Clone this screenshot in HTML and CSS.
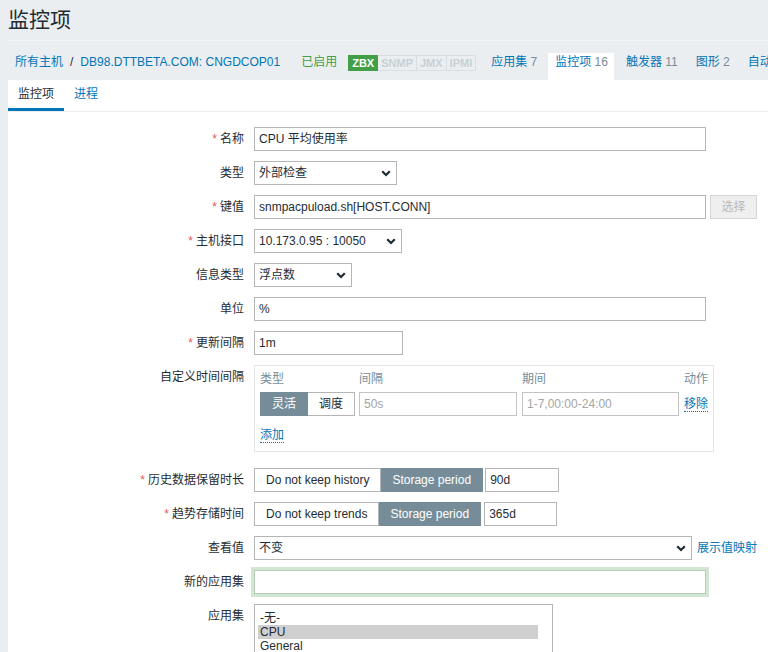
FILE: index.html
```html
<!DOCTYPE html>
<html lang="zh-CN">
<head>
<meta charset="utf-8">
<title>监控项</title>
<link rel="stylesheet" href="styles.css">
</head>
<body>
<div class="page">
  <header class="head"><h1>监控项</h1></header>
  <nav class="crumbs">
    <a class="crumb">所有主机</a><span class="sep">/</span><a class="crumb">DB98.DTTBETA.COM: CNGDCOP01</a>
    <span class="status">已启用</span>
    <span class="badges"><span class="badge on">ZBX</span><span class="badge">SNMP</span><span class="badge">JMX</span><span class="badge">IPMI</span></span>
    <a class="navtab first">应用集 <span class="cnt">7</span></a>
    <a class="navtab current">监控项 <span class="cnt">16</span></a>
    <a class="navtab">触发器 <span class="cnt">11</span></a>
    <a class="navtab">图形 <span class="cnt">2</span></a>
    <a class="navtab">自动发现规则</a>
  </nav>
  <main class="panel">
    <div class="tabs"><span class="tab active">监控项</span><span class="tab">进程</span></div>
    <div class="form">
      <div class="lbl req">名称</div>
      <div class="ctl"><div class="field wide">CPU 平均使用率</div></div>

      <div class="lbl">类型</div>
      <div class="ctl"><div class="field select w-type"><span>外部检查</span><svg class="chev" width="10" height="7" viewBox="0 0 10 7"><path d="M1.2 1.2l3.8 3.8 3.8-3.8" fill="none" stroke="#1f2c33" stroke-width="2.2"/></svg></div></div>

      <div class="lbl req">键值</div>
      <div class="ctl"><div class="field wide">snmpacpuload.sh[HOST.CONN]</div><div class="btn-disabled">选择</div></div>

      <div class="lbl req">主机接口</div>
      <div class="ctl"><div class="field select w-iface"><span>10.173.0.95 : 10050</span><svg class="chev" width="10" height="7" viewBox="0 0 10 7"><path d="M1.2 1.2l3.8 3.8 3.8-3.8" fill="none" stroke="#1f2c33" stroke-width="2.2"/></svg></div></div>

      <div class="lbl">信息类型</div>
      <div class="ctl"><div class="field select w-info"><span>浮点数</span><svg class="chev" width="10" height="7" viewBox="0 0 10 7"><path d="M1.2 1.2l3.8 3.8 3.8-3.8" fill="none" stroke="#1f2c33" stroke-width="2.2"/></svg></div></div>

      <div class="lbl">单位</div>
      <div class="ctl"><div class="field wide">%</div></div>

      <div class="lbl req">更新间隔</div>
      <div class="ctl"><div class="field w-delay">1m</div></div>

      <div class="lbl">自定义时间间隔</div>
      <div class="ctl">
        <div class="intervals">
          <div class="ihead">类型</div><div class="ihead">间隔</div><div class="ihead">期间</div><div class="ihead ralign">动作</div>
          <div class="seg"><span class="on">灵活</span><span>调度</span></div>
          <div class="field ph">50s</div>
          <div class="field ph">1-7,00:00-24:00</div>
          <div class="ralign action"><a class="dotted">移除</a></div>
          <div class="addrow"><a class="dotted">添加</a></div>
        </div>
      </div>

      <div class="lbl req">历史数据保留时长</div>
      <div class="ctl"><div class="seg"><span>Do not keep history</span><span class="on">Storage period</span></div><div class="field w-hist">90d</div></div>

      <div class="lbl req">趋势存储时间</div>
      <div class="ctl"><div class="seg"><span>Do not keep trends</span><span class="on">Storage period</span></div><div class="field w-trend">365d</div></div>

      <div class="lbl">查看值</div>
      <div class="ctl"><div class="field select w-view"><span>不变</span><svg class="chev" width="10" height="7" viewBox="0 0 10 7"><path d="M1.2 1.2l3.8 3.8 3.8-3.8" fill="none" stroke="#1f2c33" stroke-width="2.2"/></svg></div><a class="link">展示值映射</a></div>

      <div class="lbl">新的应用集</div>
      <div class="ctl"><div class="field wide focus"></div></div>

      <div class="lbl">应用集</div>
      <div class="ctl">
        <div class="listbox">
          <div class="opt">-无-</div>
          <div class="opt sel">CPU</div>
          <div class="opt">General</div>
          <div class="opt">Memory</div>
          <div class="opt">Network</div>
        </div>
      </div>
    </div>
  </main>
</div>
</body>
</html>
```

FILE: styles.css
```css
* { box-sizing: border-box; }
html, body { margin: 0; padding: 0; overflow: hidden; }
body {
  width: 768px;
  height: 652px;
  background: #ebeef0;
  color: #1f2c33;
  font: 12px/1.2 "Liberation Sans", Arial, "Noto Sans CJK SC", sans-serif;
}
a { text-decoration: none; cursor: pointer; }

.page { padding-left: 8px; }

.head {
  height: 41px;
  display: flex;
  align-items: center;
  border-bottom: 1px solid #f3f4f5;
}
.head h1 {
  margin: 0;
  font-size: 21px;
  font-weight: normal;
  line-height: 24px;
  color: #1f2c33;
}

.crumbs {
  display: flex;
  align-items: flex-start;
  height: 39px;
  padding: 12px 0 0 7px;
  white-space: nowrap;
}
.crumb { color: #0275b8; line-height: 18px; }
.sep { padding: 0 7px; line-height: 18px; }
.status { margin-left: 21px; color: #429e47; line-height: 18px; }
.badges { display: flex; margin-left: 11px; margin-top: 2px; }
.badge {
  height: 16px;
  line-height: 14px;
  padding: 0 3px;
  border: 1px solid #d9dee1;
  color: #c8d0d5;
  font-size: 11px;
  font-weight: bold;
}
.badge + .badge { border-left: none; }
.badge.on { background: #429e47; border-color: #429e47; color: #fff; padding: 0 3px; }
.navtab {
  color: #0275b8;
  line-height: 18px;
  padding: 0 6px 0 7px;
  margin-left: 5px;
}
.navtab.first { margin-left: 8px; }
.navtab.current { background: #fff; height: 27px; }
.cnt { color: #768d99; }

.panel { background: #fff; height: 580px; }

.tabs { display: flex; border-bottom: 1px solid #ebeef0; }
.tab {
  padding: 0 10px;
  line-height: 28px;
  border-bottom: 3px solid transparent;
  color: #0275b8;
}
.tab.active { border-bottom-color: #0275b8; color: #1f2c33; }

.form {
  display: grid;
  grid-template-columns: 236px max-content;
  column-gap: 10px;
  row-gap: 10px;
  padding-top: 15px;
  align-items: start;
}
.lbl { text-align: right; line-height: 24px; white-space: nowrap; }
.req::before { content: "*"; color: #e45959; margin-right: 3px; }
.ctl { display: flex; align-items: flex-start; }

.field {
  height: 24px;
  border: 1px solid #b5b5b5;
  background: #fff;
  padding: 0 5px 0 4px;
  line-height: 22px;
  white-space: nowrap;
  overflow: hidden;
}
.select { display: flex; justify-content: space-between; align-items: center; }
.chev { flex: none; }
.wide { width: 452px; }
.w-type { width: 143px; }
.w-iface { width: 148px; }
.w-info { width: 98px; }
.w-delay { width: 149px; }
.w-view { width: 438px; }
.w-hist { width: 74px; margin-left: 2px; }
.w-trend { width: 73px; margin-left: 3px; }

.btn-disabled {
  margin-left: 4px;
  width: 47px;
  height: 24px;
  line-height: 22px;
  text-align: center;
  background: #efefef;
  border: 1px solid #d6d6d6;
  color: #b8b8b8;
}

.intervals {
  width: 460px;
  border: 1px solid #e3e7e9;
  padding: 3px 5px 6px;
  margin-bottom: 6px;
  display: grid;
  grid-template-columns: 94px 158px 157px 1fr;
  column-gap: 5px;
}
.ihead { line-height: 20px; height: 20px; color: #768d99; margin-bottom: 3px; }
.ralign { text-align: right; }
.action { line-height: 24px; }
.ph { color: #a5a5a5; border-color: #c4c4c4; }
.addrow { grid-column: 1 / -1; margin-top: 9px; line-height: 20px; }
.dotted { color: #0275b8; border-bottom: 1px dotted #0275b8; }

.seg { display: flex; }
.seg span {
  height: 24px;
  line-height: 22px;
  padding: 0 11px;
  border: 1px solid #b5b5b5;
  background: #fff;
  white-space: nowrap;
}
.seg span + span { border-left: none; }
.seg .on { background: #768d99; border-color: #768d99; color: #fff; }

.link { color: #0275b8; margin-left: 5px; line-height: 24px; }

.focus { border-color: #b4cbb4; box-shadow: 0 0 0 3px #d2e7d2; }

.listbox {
  width: 299px;
  height: 110px;
  border: 1px solid #b5b5b5;
  padding: 6px 14px 0 3px;
  overflow: hidden;
}
.opt { line-height: 14px; padding-left: 2px; white-space: nowrap; }
.opt.sel { background: #cfcfcf; }
```
